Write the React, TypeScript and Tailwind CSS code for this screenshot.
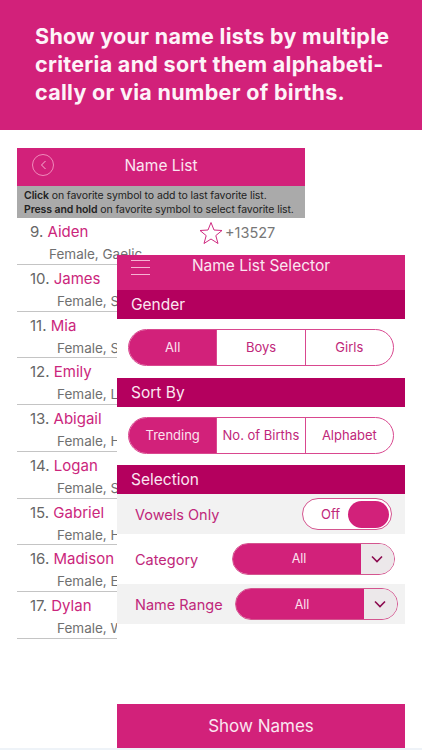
const font = { fontFamily: "Inter, 'Liberation Sans', sans-serif" };

const NAMES = [
  { no: "9.", name: "Aiden", sub: "Female, Gaelic", subIndent: "pl-[19px]" },
  { no: "10.", name: "James", sub: "Female, Scottish", subIndent: "w-[100px] overflow-hidden whitespace-nowrap pl-[27px]" },
  { no: "11.", name: "Mia", sub: "Female, Scottish", subIndent: "w-[100px] overflow-hidden whitespace-nowrap pl-[27px]" },
  { no: "12.", name: "Emily", sub: "Female, Latin", subIndent: "w-[100px] overflow-hidden whitespace-nowrap pl-[27px]" },
  { no: "13.", name: "Abigail", sub: "Female, Hebrew", subIndent: "w-[100px] overflow-hidden whitespace-nowrap pl-[27px]" },
  { no: "14.", name: "Logan", sub: "Female, Scottish", subIndent: "w-[100px] overflow-hidden whitespace-nowrap pl-[27px]" },
  { no: "15.", name: "Gabriel", sub: "Female, Hebrew", subIndent: "w-[100px] overflow-hidden whitespace-nowrap pl-[27px]" },
  { no: "16.", name: "Madison", sub: "Female, English", subIndent: "w-[100px] overflow-hidden whitespace-nowrap pl-[27px]" },
  { no: "17.", name: "Dylan", sub: "Female, Welsh", subIndent: "w-[100px] overflow-hidden whitespace-nowrap pl-[27px]" },
];

function SectionBar({ label }: { label: string }) {
  return (
    <div className="h-[29px] bg-[#b4005e] pl-[14px] text-[15.5px] leading-[29px] text-[#fbe6f1]">
      {label}
    </div>
  );
}

function Segmented({ items }: { items: string[] }) {
  return (
    <div className="mx-[11px] flex h-[37px] w-[266px] overflow-hidden rounded-full border-[1.5px] border-[#d9488f] bg-white">
      {items.map((item, i) => (
        <div
          key={item}
          className={`flex flex-1 items-center justify-center pt-px text-[13px] ${
            i === 0 ? "bg-[#d2217a] text-[#fbe3ef]" : "border-l-[1.5px] border-[#d9488f] text-[#c0277a]"
          }`}
        >
          {item}
        </div>
      ))}
    </div>
  );
}

function Dropdown({ className }: { className: string }) {
  return (
    <div className={`flex h-[32px] w-[163px] overflow-hidden rounded-full border border-[#d4558f] ${className}`}>
      <div className="flex flex-1 items-center justify-center bg-[#d2217a] pl-[4px] pt-[2px] text-[12.5px] text-[#fbe3ef]">All</div>
      <div className="flex w-[33px] items-center justify-center bg-[#ece8ea] pr-[2px]">
        <svg width="12" height="8" viewBox="0 0 12 8" fill="none" stroke="#8c0b50" strokeWidth="1.6">
          <path d="M1 1.5 L6 6.5 L11 1.5" />
        </svg>
      </div>
    </div>
  );
}

export default function App() {
  return (
    <div className="relative h-[750px] w-[422px] overflow-hidden bg-white" style={font}>
      {/* Promo heading */}
      <div className="h-[130px] bg-[#d2217a] pl-[35px] pt-[22px] text-[21.5px] font-bold leading-[28px] tracking-[0.3px] text-[#fdf3f8]">
        <div>Show your name lists by multiple</div>
        <div>criteria and sort them alphabeti-</div>
        <div>cally or via number of births.</div>
      </div>

      {/* Name list behind the selector */}
      <div className="ml-[17px] mt-[18px] w-[288px]">
        <div className="relative flex h-[38px] items-center justify-center bg-[#d2217a] text-[15.5px] text-[#fbe6f1]">
          <div className="absolute left-[15px] top-[6px] flex h-[22px] w-[22px] items-center justify-center rounded-full border border-[#f08abb]">
            <svg width="7" height="10" viewBox="0 0 7 10" fill="none" stroke="#f6b3d3" strokeWidth="1">
              <path d="M5.5 1 L1.5 5 L5.5 9" />
            </svg>
          </div>
          <span className="relative -top-px">Name List</span>
        </div>
        <div className="h-[32px] bg-[#aaaaaa] pl-[7px] pt-[3px] text-[10.5px] leading-[14px] text-[#222222]">
          <div className="tracking-[-0.1px]"><b className="font-semibold">Click</b> on favorite symbol to add to last favorite list.</div>
          <div className="tracking-[-0.1px]"><b className="font-semibold">Press and hold</b> on favorite symbol to select favorite list.</div>
        </div>
        {NAMES.map((row, i) => (
          <div key={row.no} className="relative h-[46.75px] border-b border-[#c4c4c4] pl-[13px]">
            <div className="pt-[4px] text-[15px] leading-[20px] text-[#666666]">
              {row.no} <span className="text-[#cb267c]">{row.name}</span>
            </div>
            <div className={`${row.subIndent} pt-[2px] text-[13.5px] leading-[20px] text-[#707070]`}>{row.sub}</div>
            {i === 0 && (
              <div className="absolute left-[182px] top-[3px] flex items-center text-[14.5px] text-[#777777]">
                <svg width="24" height="24" viewBox="0 0 24 24" fill="none" stroke="#cf2a80" strokeWidth="1">
                  <path d="M12 1.5 L15 9 L23 9.5 L16.8 14.6 L19 22.5 L12 18 L5 22.5 L7.2 14.6 L1 9.5 L9 9 Z" />
                </svg>
                <span className="ml-[2px]">+13527</span>
              </div>
            )}
          </div>
        ))}
      </div>

      {/* Name list selector overlay */}
      <div className="absolute left-[117px] top-[255px] h-[495px] w-[288px] bg-white">
        <div className="relative h-[35px] bg-[#d2217a] text-center text-[15.5px] leading-[22px] text-[#fbe6f1]">
          <div className="absolute left-[14px] top-[5px] flex w-[19px] flex-col gap-[6px]">
            <div className="h-px bg-[#f6b3d3]" />
            <div className="h-px bg-[#f6b3d3]" />
            <div className="h-px bg-[#f6b3d3]" />
          </div>
          <span>Name List Selector</span>
        </div>
        <SectionBar label="Gender" />
        <div className="pb-[12px] pt-[10px]">
          <Segmented items={["All", "Boys", "Girls"]} />
        </div>
        <SectionBar label="Sort By" />
        <div className="pb-[11px] pt-[10px]">
          <Segmented items={["Trending", "No. of Births", "Alphabet"]} />
        </div>
        <SectionBar label="Selection" />

        <div className="flex h-[40px] items-center justify-between bg-[#f2f2f2] pl-[18px] pr-[13px] text-[14.5px] text-[#c0277a]">
          <span className="pt-[2px]">Vowels Only</span>
          <div className="flex h-[32px] w-[90px] items-center justify-between rounded-full border border-[#d4558f] bg-white pl-[18px] pr-[2px]">
            <span className="pt-[2px] text-[13px]">Off</span>
            <div className="h-[27px] w-[41px] rounded-full bg-[#d2217a]" />
          </div>
        </div>
        <div className="flex h-[50px] items-center justify-between pl-[18px] pr-[10px] text-[14.5px] text-[#c0277a]">
          <span className="pt-[2px]">Category</span>
          <Dropdown className="mb-[1px]" />
        </div>
        <div className="flex h-[40px] items-center justify-between bg-[#f2f2f2] pl-[18px] pr-[7px] text-[14.5px] text-[#c0277a]">
          <span className="pt-[2px]">Name Range</span>
          <Dropdown className="" />
        </div>

        <div className="mt-[80px] flex h-[44px] items-center justify-center bg-[#d2217a] pt-[2px] text-[17px] text-[#fbe6f1]">
          Show Names
        </div>
      </div>
      <div className="absolute bottom-0 left-0 h-[2px] w-full bg-[#eef3f8]" />
    </div>
  );
}
